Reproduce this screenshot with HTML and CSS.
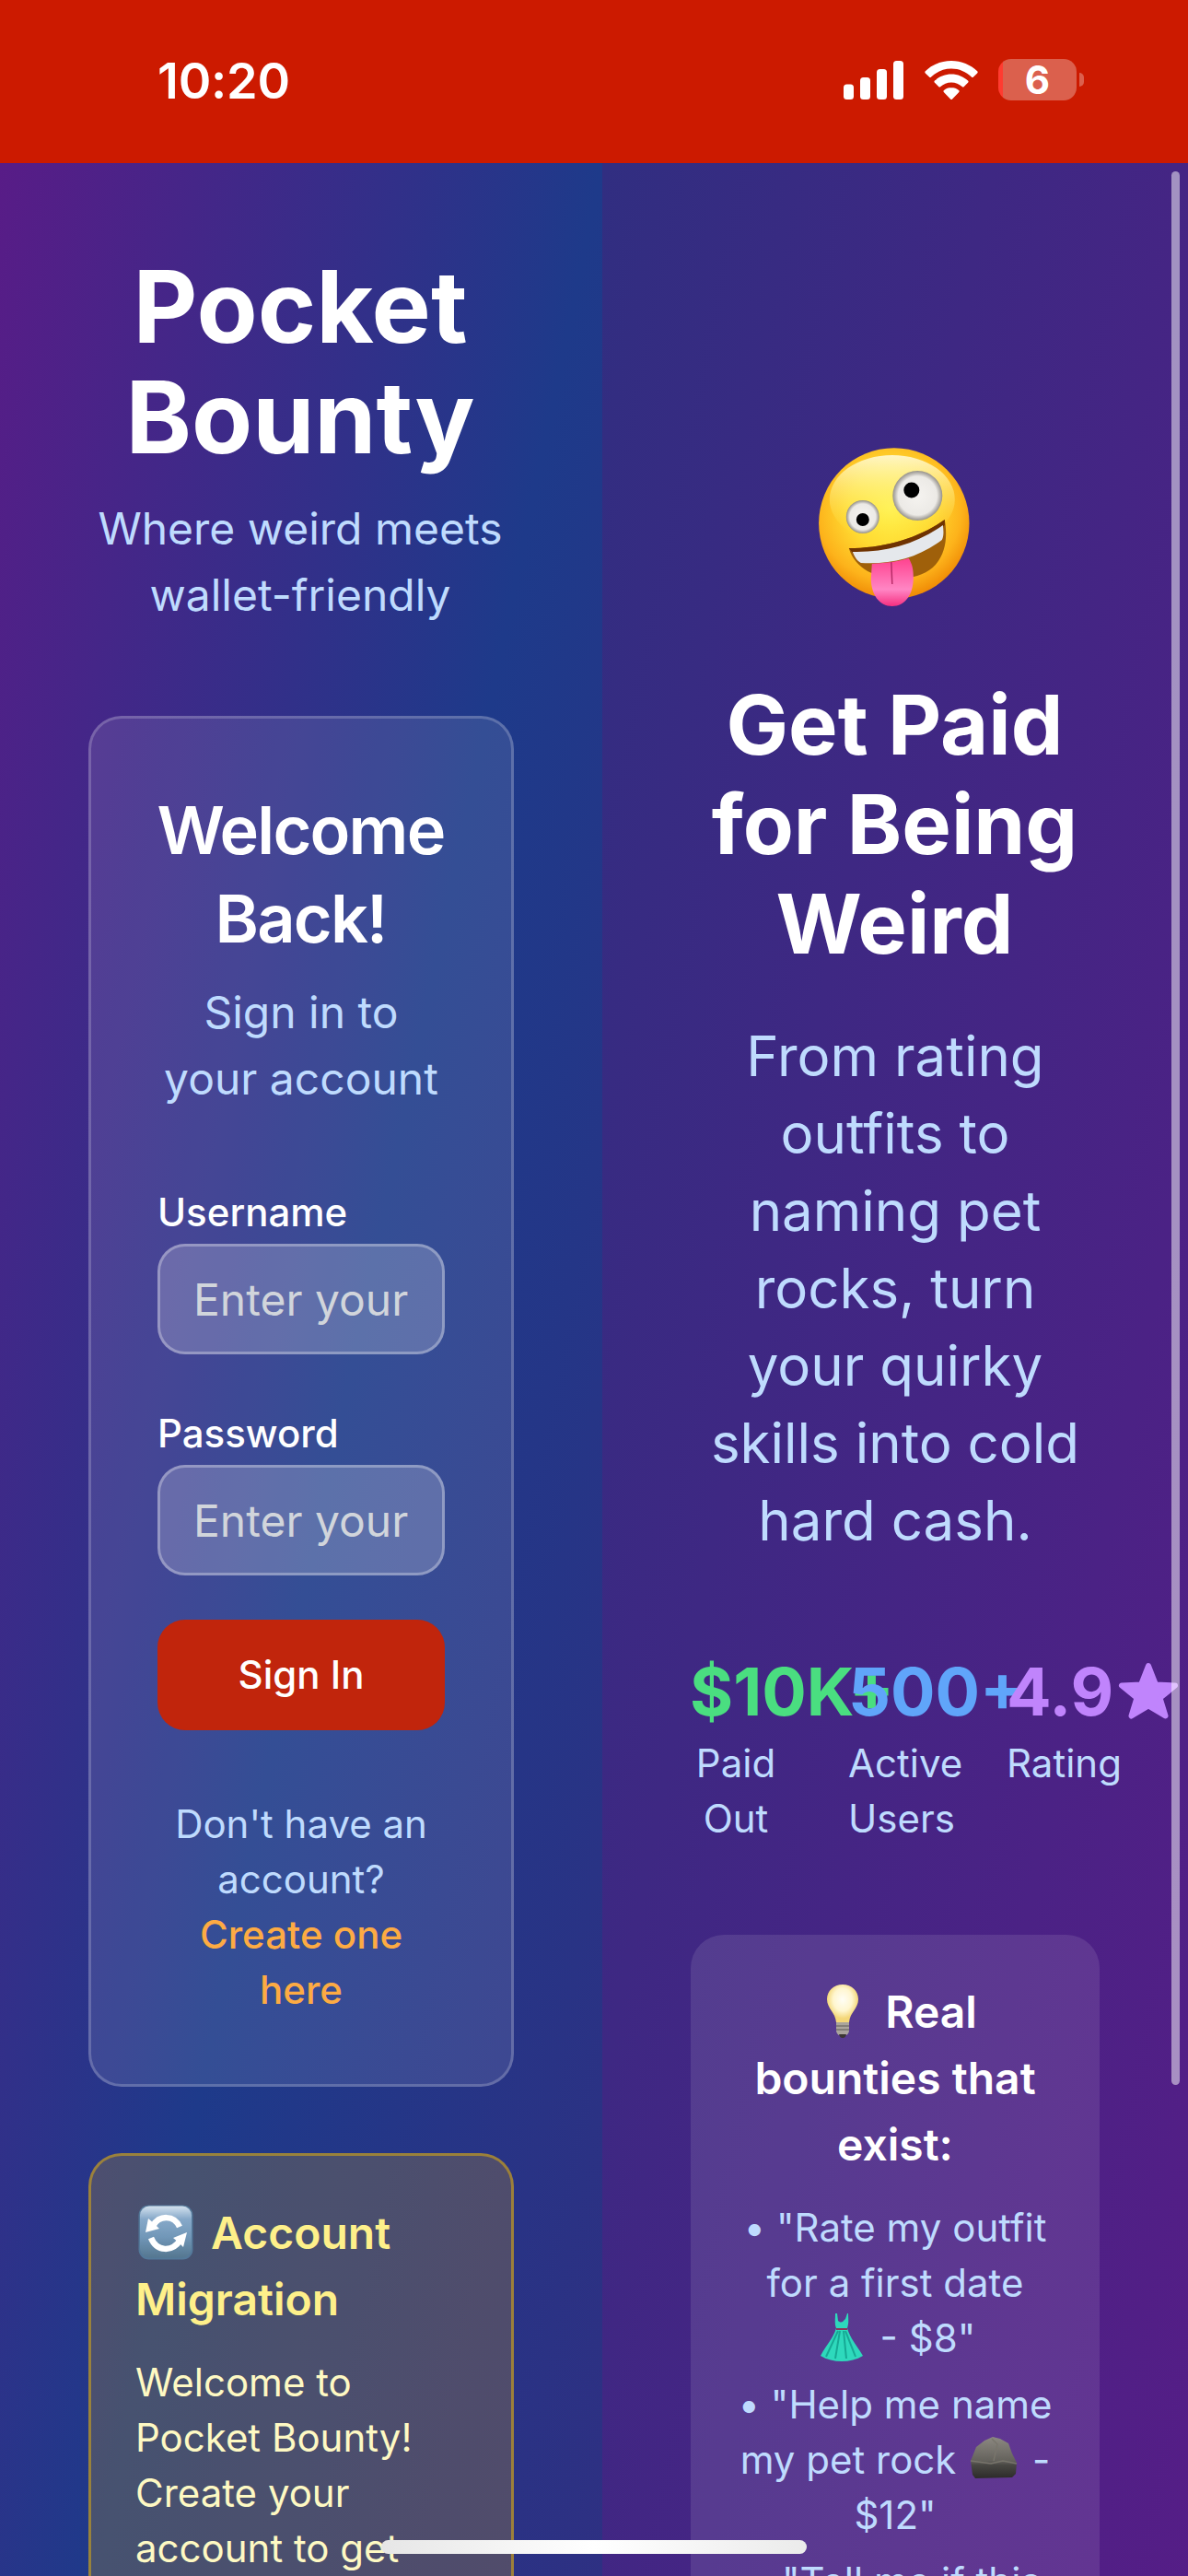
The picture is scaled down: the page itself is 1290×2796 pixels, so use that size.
FILE: index.html
```html
<!DOCTYPE html>
<html lang="en">
<head>
<meta charset="utf-8">
<title>Pocket Bounty</title>
<link rel="stylesheet" href="styles.css">
</head>
<body>
<div class="screen">
  <header class="status-bar">
    <span class="clock">10:20</span>
    <div class="indicators">
      <svg class="signal" width="66" height="42" viewBox="0 0 66 42" fill="#fff"><rect x="0" y="25.500" width="11" height="16.500" rx="3.500"/><rect x="18" y="18" width="11" height="24" rx="3.500"/><rect x="36" y="9" width="11" height="33" rx="3.500"/><rect x="54" y="0" width="11" height="42" rx="3.500"/></svg>
      <svg class="wifi" width="58" height="42" viewBox="0 0 58 42" fill="#fff"><path d="M29 0C18 0 8 4.300.8 11.300a1.500 1.500 0 0 0 0 2.100l4.200 4.200a1.500 1.500 0 0 0 2.100 0C13 12 20.500 8.600 29 8.600S45 12 50.900 17.600a1.500 1.500 0 0 0 2.100 0l4.200-4.200a1.500 1.500 0 0 0 0-2.100C50 4.300 40 0 29 0z"/><path d="M29 14.500c-7 0-13.300 2.700-18 7.100a1.500 1.500 0 0 0 0 2.200l4.200 4.200a1.500 1.500 0 0 0 2.100 0c3.100-2.900 7.200-4.600 11.700-4.600s8.600 1.700 11.700 4.600a1.500 1.500 0 0 0 2.100 0l4.200-4.200a1.500 1.500 0 0 0 0-2.200c-4.700-4.400-11-7.100-18-7.100z"/><path d="M29 29c-3.100 0-5.900 1.100-8 3a1.500 1.500 0 0 0 0 2.200l7 7.200a1.500 1.500 0 0 0 2.100 0l7-7.200a1.500 1.500 0 0 0 0-2.200c-2.200-1.900-5-3-8.100-3z"/></svg>
      <div class="battery"><span class="battery-body">6</span><i class="battery-cap"></i></div>
    </div>
  </header>

  <main class="page">
    <section class="auth">
      <div class="brand">
        <h1>Pocket Bounty</h1>
        <p>Where weird meets wallet-friendly</p>
      </div>

      <div class="card">
        <div class="card-head">
          <h2>Welcome Back!</h2>
          <p>Sign in to<br>your account</p>
        </div>
        <form class="form">
          <div class="field"><label for="user">Username</label><input id="user" type="text" placeholder="Enter your username"></div>
          <div class="field"><label for="pass">Password</label><input id="pass" type="password" placeholder="Enter your password"></div>
          <button type="button">Sign In</button>
        </form>
        <p class="signup">Don't have an account? <a>Create one here</a></p>
      </div>

      <div class="notice">
        <h3><svg class="emoji tile" viewBox="0 0 60 60"><defs><linearGradient id="tile" x2="0" y2="1"><stop offset="0" stop-color="#d3e1ee"/><stop offset=".25" stop-color="#87a9c9"/><stop offset=".6" stop-color="#7197b8"/><stop offset="1" stop-color="#557790"/></linearGradient></defs><rect x=".5" y=".5" width="59" height="59" rx="11" fill="#54799a"/><rect x="2" y="1.500" width="56" height="56" rx="10" fill="url(#tile)"/><g fill="none" stroke="#fff" stroke-width="6.500"><path d="M16 23C23 11 39 11 45 24"/><path d="M14 36C20 51 37 52 46 38"/></g><path d="M11 15l-3 15 15-4-5-5zM53 30l-4 16-4-4-7-6z" fill="#fff"/></svg> Account Migration</h3>
        <p>Welcome to Pocket Bounty! Create your account to get started</p>
      </div>
    </section>

    <section class="pitch">
      <svg class="zany" viewBox="0 0 180 180">
        <defs>
          <radialGradient id="face" cx=".47" cy=".4" r=".6"><stop offset="0" stop-color="#fff04a"/><stop offset=".45" stop-color="#ffdb32"/><stop offset=".8" stop-color="#fdb31b"/><stop offset="1" stop-color="#f08c06"/></radialGradient>
          <linearGradient id="shine" x2="0" y2="1"><stop offset="0" stop-color="#fffde0"/><stop offset=".9" stop-color="#fff34a" stop-opacity="0"/></linearGradient>
          <radialGradient id="eye"><stop offset="0" stop-color="#f5f3f0"/><stop offset=".78" stop-color="#eceae6"/><stop offset="1" stop-color="#94908a"/></radialGradient>
          <linearGradient id="tongue" x2="0" y2="1"><stop offset="0" stop-color="#ff428f"/><stop offset=".65" stop-color="#ff86c4"/><stop offset="1" stop-color="#f52f80"/></linearGradient>
        </defs>
        <g transform="translate(-1.200 0)">
        <circle cx="90" cy="88" r="81.700" fill="url(#face)"/>
        <ellipse cx="88" cy="62" rx="68" ry="48" fill="url(#shine)" opacity=".85"/>
        <circle cx="56" cy="81" r="18" fill="url(#eye)"/><circle cx="56" cy="84" r="7" fill="#000"/>
        <circle cx="115.500" cy="58" r="27" fill="url(#eye)"/><circle cx="109" cy="52" r="8.500" fill="#000"/>
        <path d="M41 115c38 0 76-11 104-31 3 18 2 38-13 52-24 21-81 15-91-21z" fill="#9f600a"/>
        <path d="M41 115c38 0 76-11 104-31v6C118 110 80 120 45 120z" fill="#6f3302"/>
        <path d="M45 119c35 1 71-9 98-29 1 7 1 12-1 16-26 20-57 27-88 25-4-2-7-7-9-12z" fill="#e5e8ec"/>
        <path d="M66 132c12-1 27-2 40-6 4 7 5 12 5 21 0 18-9 31-23 31s-23-13-23-30z" fill="url(#tongue)"/>
        <path d="M87 130l1 24" stroke="#b72c68" stroke-width="1.500"/>
        </g>
      </svg>
      <h2>Get Paid for Being Weird</h2>
      <p class="lead">From rating outfits to naming pet rocks, turn your quirky skills into cold hard cash.</p>

      <div class="stats">
        <div><strong class="green">$10K+</strong><span>Paid Out</span></div>
        <div><strong class="blue">500+</strong><span>Active Users</span></div>
        <div><strong class="purple">4.9<svg class="star" viewBox="0 0 66 62"><path d="M33 4l8 20.500 21 1-16.500 13.500 6 19.500L33 47.500 14.500 58.500l6-19.500L4 25.500l21-1z" fill="#c084fc" stroke="#c084fc" stroke-width="6" stroke-linejoin="round"/></svg></strong><span>Rating</span></div>
      </div>

      <div class="examples">
        <h3><svg class="emoji bulb" viewBox="0 0 60 60"><defs><radialGradient id="glow" cx=".5" cy=".4"><stop offset="0" stop-color="#fffef6"/><stop offset=".6" stop-color="#fff6cf"/><stop offset="1" stop-color="#f4d778"/></radialGradient></defs><path d="M30 1c-10 0-17 7-17 16 0 10 9 14 10 25h14c1-11 10-15 10-25C47 8 40 1 30 1z" fill="url(#glow)"/><path d="M23 42h14v9c0 3-3 5-3 5h-8s-3-2-3-5z" fill="#aaa49c"/><path d="M23 46h14M23 50h14" stroke="#77716c" stroke-width="1.500"/><path d="M26 55h8c-1 3-2 4-4 4s-3-1-4-4z" fill="#3b3633"/></svg> Real<br>bounties that<br>exist:</h3>
        <ul>
          <li>• "Rate my outfit<br>for a first date<br><svg class="emoji small" viewBox="0 0 54 54"><path d="M20 1h2l1 8c4 3 5 1 8-2l2-6h1c0 6 1 10-1 16 3 11 10 18 17 30-13 8-33 8-46 0 6-12 14-19 17-30-2-5-1-9-1-16z" fill="#2ed9bc"/><path d="M23 20L10 48M25 20l-5 30M29 20l3 30M31 20l11 28" stroke="#16a994" stroke-width="2" fill="none"/><path d="M21 18h12" stroke="#8b3559" stroke-width="2"/></svg> - $8"</li>
          <li>• "Help me name<br>my pet rock <svg class="emoji small" viewBox="0 0 54 54"><defs><linearGradient id="rock" x2="0" y2="1"><stop offset="0" stop-color="#8c8981"/><stop offset=".58" stop-color="#64625c"/><stop offset=".68" stop-color="#484743"/><stop offset="1" stop-color="#2c2b29"/></linearGradient></defs><path d="M8 14l9-7 9-4 8 2 9 5 4 11 5 10-1 12-4 4-40 1-3-4-2-15z" fill="url(#rock)"/><path d="M2 29l22 3 13-3 15 3M25 5l6 6-4 18" stroke="#78756c" stroke-width="1.500" fill="none"/></svg> -<br>$12"</li>
          <li>• "Tell me if this</li>
        </ul>
      </div>
    </section>
  </main>
  <i class="scroll-thumb"></i>
  <i class="home-indicator"></i>
</div>
</body>
</html>
```
FILE: styles.css
```css
* { box-sizing: border-box; margin: 0; padding: 0; }
body {
  font-family: Inter, "Liberation Sans", sans-serif;
  font-optical-sizing: none;
  font-variation-settings: "opsz" 14;
  font-size: 48px;
  line-height: 72px;
  color: #fff;
  overflow: hidden;
}
.screen { position: relative; width: 1290px; height: 2796px; overflow: hidden; }

.status-bar {
  height: 177px;
  background: #cc1a00;
  display: flex;
  justify-content: space-between;
  padding: 0 113px 4px 171px;
  align-items: center;
}
.clock { font-size: 54px; font-weight: 600; letter-spacing: -.2px; padding-top: 2px; }
.indicators { display: flex; align-items: center; gap: 22px; }
.indicators svg { display: block; }
.battery { display: flex; align-items: center; gap: 3px; }
.battery-body {
  width: 85px;
  height: 45px;
  border-radius: 14px;
  background: linear-gradient(90deg, #ff3b30 5px, #db604d 5px);
  font-size: 42px;
  font-weight: 700;
  line-height: 46px;
  text-align: center;
}
.battery-cap { width: 5px; height: 15px; border-radius: 0 5px 5px 0; background: #db604d; }

.page { display: grid; grid-template-columns: 654px 636px; height: 3132px; }
.auth {
  padding: 96px;
  background: linear-gradient(to bottom right, #581c87, #1e3a8a, #312e81);
}
.brand { text-align: center; color: #bfdbfe; margin: 0 -2px 95px -4px; }
.brand h1 { font-size: 108px; line-height: 120px; color: #fff; margin-bottom: 25px; }
.card {
  border: 3px solid rgba(255, 255, 255, .2);
  background: rgba(255, 255, 255, .1);
  border-radius: 36px;
  padding: 72px;
}
.card-head { text-align: center; color: #bfdbfe; padding-top: 1px; margin-bottom: 71px; }
.card-head h2 {
  font-size: 72px;
  line-height: 96px;
  font-weight: 600;
  letter-spacing: -.025em;
  color: #fff;
  margin: 0 -10px 18px -11px;
}
.form { display: flex; flex-direction: column; gap: 48px; }
.field label { display: block; height: 72px; line-height: 76px; font-size: 42px; font-weight: 500; }
.field input {
  display: block;
  width: 100%;
  height: 120px;
  padding: 0 36px;
  border: 3px solid rgba(255, 255, 255, .3);
  border-radius: 30px;
  background: rgba(255, 255, 255, .2);
  font: inherit;
  color: #fff;
}
.field input::placeholder { color: #d1d5db; }
button {
  height: 120px;
  border: 0;
  border-radius: 30px;
  background: #c1250c;
  color: #fff;
  font: inherit;
  font-size: 42px;
  font-weight: 500;
}
.signup { margin-top: 72px; text-align: center; font-size: 42px; line-height: 60px; color: #bfdbfe; }
.signup a { color: #fdab43; font-weight: 500; }
.notice {
  height: 600px;
  margin-top: 72px;
  padding: 48px;
  border: 3px solid rgba(234, 179, 8, .5);
  border-radius: 36px;
  background: rgba(234, 179, 8, .2);
}
.notice h3 { font-size: 48px; font-weight: 600; color: #fef08a; margin-bottom: 24px; }
.notice p { font-size: 42px; line-height: 60px; color: #fef9c3; }
.emoji { width: 60px; height: 60px; vertical-align: -12px; margin: 0 4px 0 2px; }
.emoji.tile { margin: 0 7px 0 3px; }
.emoji.small { width: 54px; height: 54px; vertical-align: -11px; margin: 0 3px 0 2px; }

.pitch {
  padding: 303px 96px 0;
  text-align: center;
  background: linear-gradient(to bottom right, #312e81, #581c87);
}
.zany { display: block; width: 180px; height: 180px; margin: 0 auto 73px; }
.pitch h2 { font-size: 90px; line-height: 108px; margin: 0 -10px 47px -11px; }
.lead { font-size: 60px; line-height: 84px; color: #bfdbfe; margin-bottom: 96px; }
.stats { display: grid; grid-template-columns: repeat(3, minmax(0, 1fr)); gap: 72px; margin: 0 1px 96px -1px; }
.stats strong { display: block; font-size: 72px; line-height: 96px; white-space: nowrap; }
.stats span { display: block; font-size: 42px; line-height: 60px; color: #bfdbfe; }
.green { color: #4ade80; }
.blue { color: #60a5fa; }
.purple { color: #c084fc; }
.star { width: 66px; height: 62px; vertical-align: -4px; margin-left: 5px; }
.examples { height: 1000px; padding: 48px; border-radius: 36px; background: rgba(255, 255, 255, .1); }
.examples h3 { font-size: 48px; font-weight: 600; margin-bottom: 24px; }
.examples ul { list-style: none; font-size: 42px; line-height: 60px; color: #bfdbfe; }
.examples li { margin-bottom: 12px; white-space: nowrap; }

.scroll-thumb {
  position: absolute;
  left: 1272px;
  top: 186px;
  width: 9px;
  height: 2077px;
  border-radius: 5px;
  background: rgba(255, 255, 255, .5);
}
.home-indicator {
  position: absolute;
  left: 414px;
  top: 2757px;
  width: 462px;
  height: 15px;
  border-radius: 8px;
  background: linear-gradient(90deg, #e6e6e6, #fff 50%, #ebebeb);
}
```
